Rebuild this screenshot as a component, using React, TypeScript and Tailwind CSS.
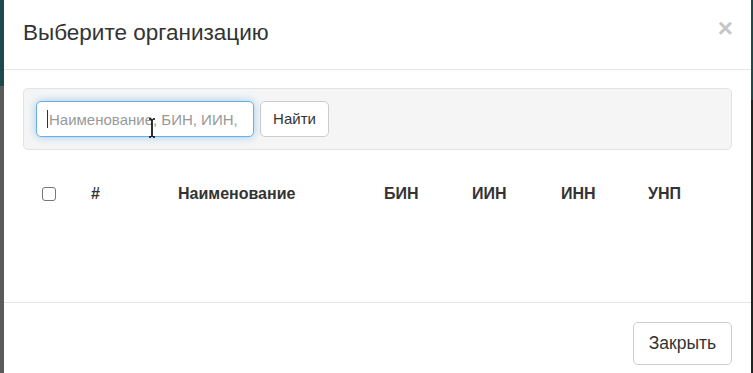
import React from "react";

const font = { fontFamily: '"Liberation Sans", Arial, sans-serif' };

export default function App() {
  const cols = [
    { label: "#", w: "w-[87px]" },
    { label: "Наименование", w: "w-[206px]" },
    { label: "БИН", w: "w-[88px]" },
    { label: "ИИН", w: "w-[89px]" },
    { label: "ИНН", w: "w-[87px]" },
    { label: "УНП", w: "w-[80px]" },
  ];
  return (
    <div className="flex w-[753px] h-[373px] overflow-hidden" style={font}>
      <div className="w-[4px] h-full bg-[linear-gradient(to_bottom,#1c4a4c_0,#1c4a4c_86px,#5a5a5a_86px)]" />
      <div className="w-[747px] h-[390px] bg-white rounded-t-[6px] flex flex-col text-[#333]">
        {/* header */}
        <div className="h-[70px] border-b border-[#e5e5e5] pl-[19px] pr-[18px] flex items-start justify-between">
          <h4 className="mt-[17px] text-[22.5px] leading-[32px] font-normal">Выберите организацию</h4>
          <button className="mt-[15px] text-[26px] font-bold leading-none text-[#c6c6c6]">×</button>
        </div>

        {/* body */}
        <div className="h-[232px] px-[19px] pt-[18px]">
          <div className="h-[62px] bg-[#f5f5f5] border border-[#e3e3e3] rounded-[5px] px-[12px] flex items-center gap-[6px]">
            <div className="relative">
              <input
                className="w-[218px] h-[36px] rounded-[5px] border border-[#66afe9] bg-white pl-[12px] pr-[10px] text-[15px] text-[#555] placeholder:text-[#999] outline-none shadow-[0_0_8px_rgba(102,175,233,0.6)]"
                placeholder="Наименование, БИН, ИИН,"
              />
              <span className="absolute left-[11px] top-[9px] w-[1px] h-[18px] bg-[#333]" />
              <svg className="absolute left-[112px] top-[17px]" width="8" height="20" viewBox="0 0 8 20">
                <path d="M1 1h2M5 1h2M4 1v18M1 19h2M5 19h2" stroke="#000" strokeWidth="1.6" fill="none" />
              </svg>
            </div>
            <button className="w-[69px] h-[36px] rounded-[5px] border border-[#ccc] bg-white text-[15px] text-[#333]">
              Найти
            </button>
          </div>

          <div className="mt-[21px] h-[46px] flex items-center pl-[19px] text-[16px] font-bold">
            <div className="w-[49px] flex items-center">
              <span className="block w-[14px] h-[14px] border border-[#767676] rounded-[3px] bg-white" />
            </div>
            {cols.map((c) => (
              <div key={c.label} className={c.w}>
                {c.label}
              </div>
            ))}
          </div>
        </div>

        {/* footer */}
        <div className="border-t border-[#e5e5e5] pt-[19px] pr-[19px] flex justify-end">
          <button className="w-[99px] h-[43px] rounded-[5px] border border-[#ccc] bg-white text-[17.5px] text-[#333]">
            Закрыть
          </button>
        </div>
      </div>
      <div className="w-[2px] h-full bg-[linear-gradient(to_bottom,#1c4a4c_0,#1c4a4c_100px,#222_100px)]" />
    </div>
  );
}
